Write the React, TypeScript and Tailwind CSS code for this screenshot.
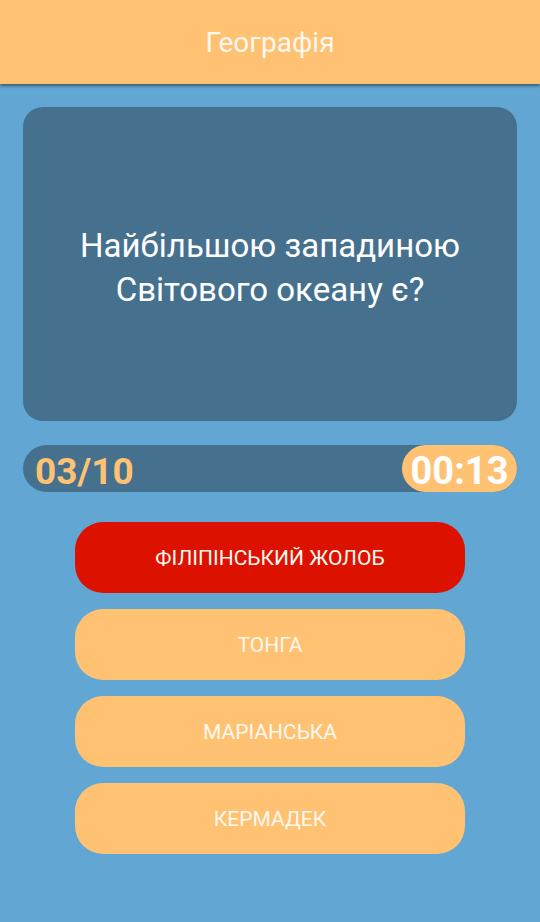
import React from 'react';

const answers = [
  { label: 'Філіпінський жолоб', wrong: true },
  { label: 'Тонга', wrong: false },
  { label: 'Маріанська', wrong: false },
  { label: 'Кермадек', wrong: false },
];

export default function App() {
  return (
    <div className="min-h-[922px] bg-[#62a7d3] font-['Roboto',sans-serif]">
      {/* Toolbar */}
      <header className="h-[84px] bg-[#ffc273] flex items-center justify-center shadow-[0_2px_3px_rgba(0,0,0,0.45)] relative">
        <h1 className="text-[28px] text-[#fff8ee] font-normal pt-[2px]">Географія</h1>
      </header>

      <main className="px-[23px] pt-[23px]">
        {/* Question card */}
        <div className="h-[314px] rounded-[20px] bg-[#45718f] flex items-center justify-center px-6">
          <p className="text-white text-[33px] leading-[44px] text-center pt-[8px]">
            Найбільшою западиною
            <br />
            Світового океану є?
          </p>
        </div>

        {/* Progress + timer */}
        <div className="mt-[24px] h-[47px] rounded-full bg-[#45718f] flex items-center justify-between">
          <span className="pl-[12px] pt-[5px] text-[37px] font-bold text-[#ffc273] leading-none">03/10</span>
          <span className="h-full w-[115px] pt-[5px] rounded-full bg-[#ffc273] flex items-center justify-center text-[38px] font-bold text-white leading-none">
            00:13
          </span>
        </div>

        {/* Answers */}
        <div className="mt-[30px] flex flex-col items-center gap-[16px]">
          {answers.map((a) => (
            <button
              key={a.label}
              className={`w-[390px] h-[71px] pt-[3px] rounded-[28px] uppercase text-[21px] text-[#fff8ee] ${
                a.wrong ? 'bg-[#dd1100]' : 'bg-[#ffc273]'
              }`}
            >
              {a.label}
            </button>
          ))}
        </div>
      </main>
    </div>
  );
}
